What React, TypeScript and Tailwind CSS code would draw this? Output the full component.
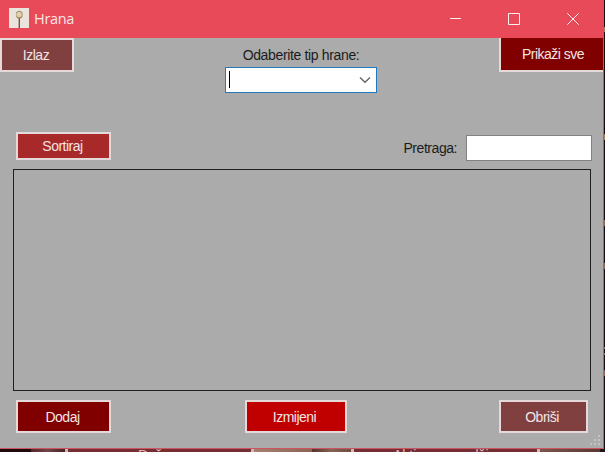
import type { ReactNode } from "react";

const btn =
  "flex shrink-0 items-center justify-center border-2 border-[#e6d9d9] text-[14px] leading-[16px] tracking-[-0.5px] text-[#f3e4e4]";

function Button({ className, children }: { className: string; children: ReactNode }) {
  return (
    <button type="button" className={`${btn} ${className}`}>
      {children}
    </button>
  );
}

function TitleBar() {
  return (
    <header className="flex h-[38px] shrink-0 items-center bg-[#e84a59]">
      <svg width="20" height="20" viewBox="0 0 20 20" className="ml-[9px] mt-[-2px] shrink-0">
        <rect width="20" height="20" fill="#ebe4dc" />
        <path d="M10.3 9v11" stroke="#715349" strokeWidth="1.4" />
        <ellipse cx="10.3" cy="6.9" rx="3.4" ry="3.7" fill="#a58d68" />
        <ellipse cx="10.1" cy="6.4" rx="2.7" ry="2.6" fill="#e0cfaa" />
        <path d="M7.2 5.2c.6-2.6 5.4-2.6 6.2 0" fill="none" stroke="#8f7a60" strokeWidth=".7" />
      </svg>
      <h1 className="ml-[5px] mt-[-1px] font-['Open_Sans','Noto_Sans',sans-serif] text-[14.5px] tracking-[-0.3px] text-[#fbe6e6]">
        Hrana
      </h1>
      <div className="ml-auto mr-[24px] flex items-center gap-[47px] text-[#fff0f0]">
        <svg width="12" height="12" viewBox="0 0 12 12" stroke="currentColor">
          <path d="M1 5.5h11" />
        </svg>
        <svg width="12" height="12" viewBox="0 0 12 12" fill="none" stroke="currentColor">
          <path d="M.5.5h11v11H.5z" />
        </svg>
        <svg width="12" height="12" viewBox="0 0 12 12" stroke="currentColor">
          <path d="m.3.3 11.4 11.4M11.7.3.3 11.7" />
        </svg>
      </div>
    </header>
  );
}

function BackgroundStrip() {
  return (
    <div className="flex h-[3px] w-full shrink-0 overflow-hidden bg-[#211719] text-[14px] leading-[14px] text-[#dfb9bb]">
      <div className="w-[31px] shrink-0 bg-[#20090d]" />
      <div className="w-[34px] shrink-0 bg-linear-to-r from-[#54282c] via-[#744448] to-[#482126]" />
      <div className="w-[186px] shrink-0 border-l-[3px] border-[#cdb7b7] bg-[#762e33] pl-[70px]">
        <span className="mt-[-1px] block tracking-[-0.35px]">Dož</span>
      </div>
      <div className="flex w-[103px] shrink-0 border-x-[3px] border-[#cdb7b7]">
        <div className="w-[58px] bg-linear-to-r from-[#a57f6d] to-[#906454]" />
        <div className="flex-1 bg-linear-to-r from-[#573430] via-[#886352] to-[#6d4b45]" />
      </div>
      <div className="w-[186px] shrink-0 border-r-[3px] border-[#cdb7b7] bg-[#762e33] pl-[39px]">
        <span className="mt-[-1px] block whitespace-nowrap">Aktivne narudži</span>
      </div>
      <div className="w-[60px] shrink-0 bg-linear-to-r from-[#80524c] via-[#69463f] to-[#5c3835]" />
    </div>
  );
}

export default function App() {
  return (
    <div className="flex h-[452px] w-[605px] flex-col overflow-hidden font-['Liberation_Sans',Arial,sans-serif]">
      <div className="flex h-[449px] shrink-0">
        <div className="flex w-[604px] flex-col border-b border-r border-[#c85561] bg-[#ababab]">
          <TitleBar />
          <main className="flex flex-1 flex-col">
            <section className="flex h-[94px] shrink-0 items-start justify-between">
              <Button className="h-[34px] w-[74px] bg-[#804040] pr-[2px]">Izlaz</Button>
              <div className="ml-[28px] flex flex-col items-center pt-[9px]">
                <label className="h-[20px] pl-[1px] text-[14px] leading-[16px] tracking-[-0.35px] text-[#1b1b1b]">
                  Odaberite tip hrane:
                </label>
                <div className="flex h-[26px] w-[152px] items-center justify-between border border-[#2379be] bg-white pl-[3px] pr-[5px]">
                  <span className="mb-[2px] h-[17px] w-px bg-black" />
                  <svg width="12" height="8" viewBox="0 0 12 8" fill="none" stroke="#666" strokeWidth="1.4">
                    <path d="m1 1.5 5 4.8 5-4.8" />
                  </svg>
                </div>
              </div>
              <Button className="h-[34px] w-[104px] border-r-0 border-t-0 bg-[#800000] pl-[2px] tracking-[-0.4px]">
                Prikaži sve
              </Button>
            </section>
            <section className="flex h-[37px] shrink-0 items-start pl-[16px] pr-[11px]">
              <Button className="h-[28px] w-[95px] bg-[#a72929] pr-[2px]">Sortiraj</Button>
              <label className="ml-auto mt-[8px] text-[14px] leading-[16px] tracking-[-0.45px] text-[#1b1b1b]">
                Pretraga:
              </label>
              <div className="ml-[9px] mt-[3px] h-[26px] w-[126px] border border-[#828282] bg-white" />
            </section>
            <div className="ml-[13px] h-[222px] w-[578px] shrink-0 border border-[#1f1f1f]" />
            <footer className="flex flex-1 items-start pl-[16px] pt-[9px]">
              <Button className="h-[33px] w-[95px] bg-[#800000] pr-[2px]">Dodaj</Button>
              <Button className="ml-[134px] h-[33px] w-[102px] bg-[#c00000] pr-[3px]">Izmijeni</Button>
              <Button className="ml-[152px] h-[33px] w-[89px] bg-[#804040] pr-[3px]">Obriši</Button>
              <svg width="11" height="11" viewBox="0 0 11 11" fill="#c4c4c4" className="ml-[2px] mt-[35px]">
                <path d="M8 0h2v2H8zM4 4h2v2H4zM8 4h2v2H8zM0 8h2v2H0zM4 8h2v2H4zM8 8h2v2H8z" />
              </svg>
            </footer>
          </main>
        </div>
        <div className="flex w-px flex-col bg-[#1b0c13] pt-[27px]">
          <div className="h-[5px] bg-[#a97858]" />
          <div className="mt-[102px] h-[6px] bg-[#a97858]" />
          <div className="mt-[80px] h-[6px] bg-[#8d6558]" />
          <div className="mt-[37px] h-[6px] bg-[#8d6558]" />
          <div className="mt-[78px] h-[2px] bg-[#8d6558]" />
          <div className="mt-[4px] h-[2px] bg-[#8d6558]" />
          <div className="mt-[15px] h-[6px] bg-[#8d6558]" />
        </div>
      </div>
      <BackgroundStrip />
    </div>
  );
}
